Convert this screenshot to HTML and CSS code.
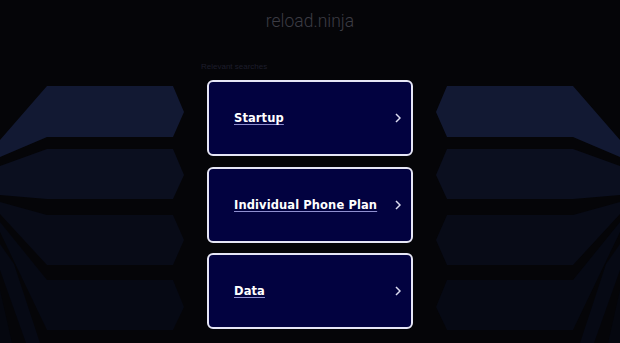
FILE: index.html
```html
<!DOCTYPE html>
<html lang="en">
<head>
  <meta charset="UTF-8">
  <meta name="viewport" content="width=device-width, initial-scale=1.0">
  <title>reload.ninja</title>
  <link rel="stylesheet" href="styles.css">
</head>
<body>
  <svg class="backdrop" width="620" height="343" viewBox="0 0 620 343">
    <g id="arrows">
      <polygon fill="#121933" points="47,86 173,86 184,112 173,137 47,137 0,157 0,140"/>
      <polygon fill="#0b0f1f" points="47,149 173,149 184,175 173,199 47,199 0,195 0,166"/>
      <polygon fill="#080b17" points="47,215 173,215 184,240 173,265 47,265 0,214 0,202"/>
      <polygon fill="#060914" points="47,280 173,280 184,307 173,330 47,330 0,232 0,222"/>
      <polygon fill="#060914" points="0,244 14,264 40,343 26,343 0,270"/>
      <polygon fill="#05070f" points="0,290 12,343 0,343"/>
    </g>
    <use href="#arrows" transform="translate(620,0) scale(-1,1)"/>
  </svg>

  <div class="page">
    <header class="site-title">reload.ninja</header>

    <div class="searches">
      <div class="searches-label">Relevant searches</div>
      <a class="search-card" href="#"><span>Startup</span><svg class="chev" width="6" height="10" viewBox="0 0 6 10"><path d="M1 1 L5 5 L1 9" fill="none" stroke="#dcdcf0" stroke-width="1.5"/></svg></a>
      <a class="search-card" href="#"><span>Individual Phone Plan</span><svg class="chev" width="6" height="10" viewBox="0 0 6 10"><path d="M1 1 L5 5 L1 9" fill="none" stroke="#dcdcf0" stroke-width="1.5"/></svg></a>
      <a class="search-card" href="#"><span>Data</span><svg class="chev" width="6" height="10" viewBox="0 0 6 10"><path d="M1 1 L5 5 L1 9" fill="none" stroke="#dcdcf0" stroke-width="1.5"/></svg></a>
    </div>
  </div>
</body>
</html>
```

FILE: styles.css
```css
body {
  margin: 0;
  background-color: #050508;
  font-family: "DejaVu Sans", sans-serif;
  overflow: hidden;
  height: 343px;
}

.backdrop {
  position: absolute;
  left: 0;
  top: 0;
}

.page {
  position: relative;
  display: flex;
  flex-direction: column;
  align-items: center;
}

.site-title {
  font-family: Roboto, sans-serif;
  font-weight: 300;
  font-size: 17.5px;
  color: #3c3c44;
  height: 22px;
  line-height: 22px;
  margin-top: 10px;
}

.searches {
  width: 219px;
  margin-top: 30px;
  margin-left: 1px;
  display: flex;
  flex-direction: column;
  gap: 10.5px;
}

.searches-label {
  font-family: "Liberation Sans", Arial, sans-serif;
  font-size: 8px;
  color: #1e1e2c;
  height: 9px;
  line-height: 9px;
  margin-bottom: -1.5px;
}

.search-card {
  margin-left: 6px;
  width: 206px;
  height: 76px;
  box-sizing: border-box;
  border: 2px solid #e6e6f6;
  border-radius: 6px;
  background-color: #020240;
  display: flex;
  align-items: center;
  justify-content: space-between;
  padding: 0 10px 0 25px;
  color: #ffffff;
  text-decoration: none;
}

.search-card span {
  font-weight: bold;
  font-size: 11.5px;
  letter-spacing: 0.1px;
  white-space: nowrap;
  text-decoration: underline;
  text-decoration-color: #8f8fd0;
  text-underline-offset: 2px;
}

.chev {
  display: block;
}
```
